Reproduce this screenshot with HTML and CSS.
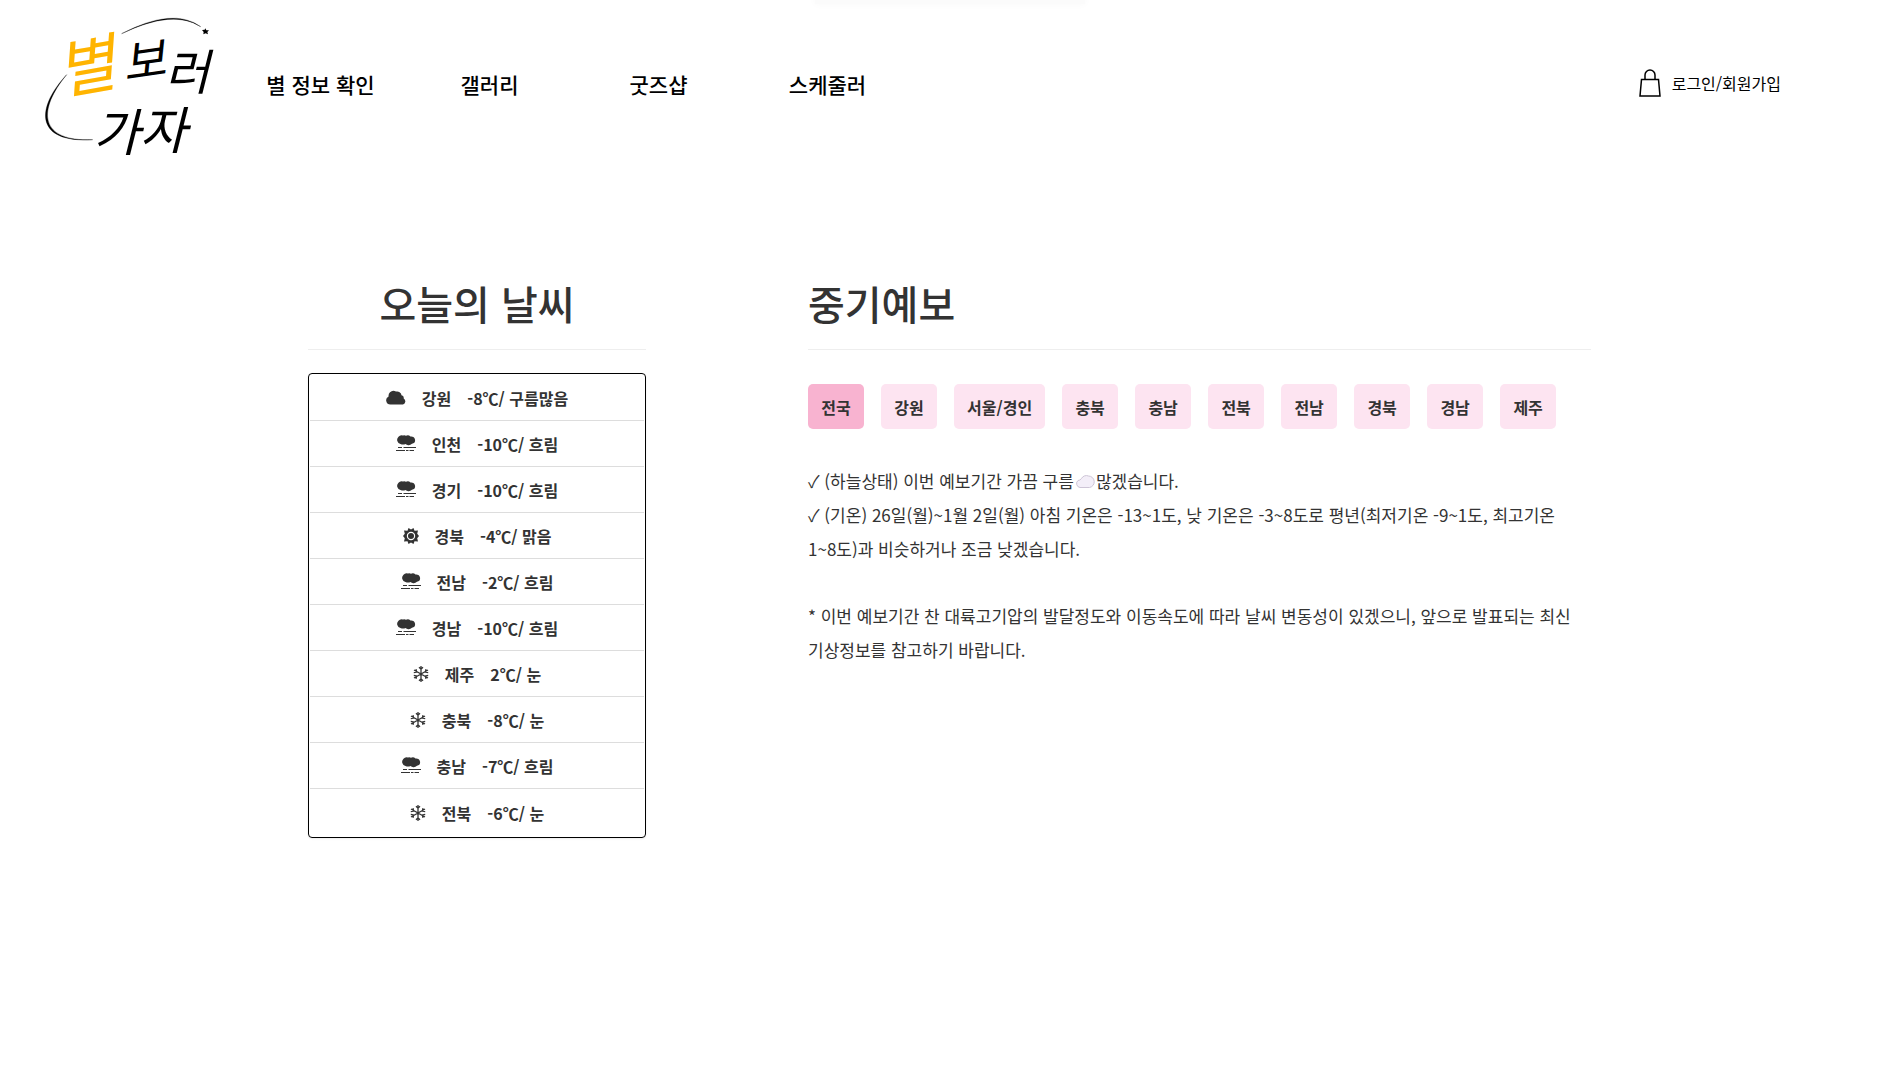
FILE: index.html
```html
<!DOCTYPE html>
<html lang="ko">
<head>
<meta charset="utf-8">
<meta name="viewport" content="width=device-width, initial-scale=1">
<title>별 보러 가자</title>
<link rel="stylesheet" href="styles.css">
</head>
<body>
<svg class="symbols" aria-hidden="true">
  <symbol id="cloud" viewBox="0 0 20 15"><path d="M4.500 14.500A4.200 4.200 0 0 1 2.600 6.500 4.800 4.800 0 0 1 4 2.300 4.800 4.800 0 0 1 10 1.600 4.300 4.300 0 0 1 15.500 5.300a2.800 2.800 0 0 1 2.200 3.200A3.300 3.300 0 0 1 17 14.500z"/></symbol>
  <symbol id="fog" viewBox="0 0 20 17"><path d="M4.500 9A4.200 4.200 0 0 1 2.500 1.800 4 4 0 0 1 7 .6 3.500 3.500 0 0 1 10 .8 4 4 0 0 1 14.500 1.600 3.700 3.700 0 0 1 19 4.500 3.600 3.600 0 0 1 16 8.700q-2 2-4.500 1.300Q10 9.500 9.500 9q-2.500 1-5 0z"/><path d="M2 12.500h4M7.500 12.500h12.500M0 15.500h9M10 15.500h2.500M13.500 15.500h4.500" fill="none" stroke="currentColor" stroke-width="1"/></symbol>
  <symbol id="sun" viewBox="0 0 16 16"><path fill-rule="evenodd" d="M8 1.500L10.500 0l1 2.800 3.500-.300-.800 3.200L16 8l-1.800 2.300.8 3.200-3.500-.3-1 2.800L8 14.500 5.500 16l-1-2.800-3.500.3.800-3.200L0 8l1.800-2.300L1 2.500l3.500.3L5.500 0zM8 3.800a4.200 4.200 0 1 0 0 8.400 4.200 4.200 0 0 0 0-8.400z"/><circle cx="8" cy="8" r="3"/></symbol>
  <symbol id="snow" viewBox="0 0 16 16"><path d="M8 0v16M1 4l14 8M1 12L15 4M6 1.200L8 3.200l2-2M6 14.800L8 12.800l2 2M.8 6.600L3.600 6 3 3.200M15.200 9.400L12.400 10l.6 2.800M.8 9.400l2.800.6L3 12.800M15.200 6.600L12.400 6l.6-2.800" fill="none" stroke="currentColor" stroke-width="1.300"/></symbol>
</svg>
<div class="top-glow"></div>
<header class="header">
  <a class="logo" href="#" aria-label="별 보러 가자">
    <svg viewBox="0 0 600 540">
      <g class="logo-text">
        <text class="star-word" x="78" y="266" font-size="190" transform="rotate(-10 180 190)">별</text>
        <text x="276" y="234" font-size="140" transform="rotate(-8 340 180)">보</text>
        <text x="404" y="270" font-size="146">러</text>
        <text x="190" y="452" font-size="152">가</text>
        <text x="330" y="448" font-size="152">자</text>
      </g>
      <path d="M275 101Q430 20 512 80Q430 26 275 101z" stroke="#000"/>
      <path d="M110 224C12 330 20 430 188 419C26 426 22 330 110 224z" stroke="#000"/>
      <path d="M526 85l3 6 8 0-5 5 2 7-7-3-7 3 1-7-5-6 8-1z"/>
    </svg>
  </a>
  <nav class="nav">
    <a href="#">별 정보 확인</a>
    <a href="#">갤러리</a>
    <a href="#">굿즈샵</a>
    <a href="#">스케줄러</a>
  </nav>
  <div class="account">
    <a class="bag" href="#" aria-label="장바구니"><svg viewBox="0 0 22 28"><path d="M2.500 10.500h17l1.500 16.500H1zM6 10.500V6a5 5 0 0 1 10 0v4.500" fill="none" stroke="#000" stroke-width="1.500"/></svg></a>
    <a href="#">로그인/회원가입</a>
  </div>
</header>
<main class="main">
  <section class="today">
    <h1>오늘의 날씨</h1>
    <ul class="weather">
      <li><svg class="wide cloud"><use href="#cloud"/></svg><span>강원</span><span>-8℃/ 구름많음</span></li>
      <li><svg class="wide"><use href="#fog"/></svg><span>인천</span><span>-10℃/ 흐림</span></li>
      <li><svg class="wide"><use href="#fog"/></svg><span>경기</span><span>-10℃/ 흐림</span></li>
      <li><svg><use href="#sun"/></svg><span>경북</span><span>-4℃/ 맑음</span></li>
      <li><svg class="wide"><use href="#fog"/></svg><span>전남</span><span>-2℃/ 흐림</span></li>
      <li><svg class="wide"><use href="#fog"/></svg><span>경남</span><span>-10℃/ 흐림</span></li>
      <li><svg><use href="#snow"/></svg><span>제주</span><span>2℃/ 눈</span></li>
      <li><svg><use href="#snow"/></svg><span>충북</span><span>-8℃/ 눈</span></li>
      <li><svg class="wide"><use href="#fog"/></svg><span>충남</span><span>-7℃/ 흐림</span></li>
      <li><svg><use href="#snow"/></svg><span>전북</span><span>-6℃/ 눈</span></li>
    </ul>
  </section>
  <section class="forecast">
    <h1>중기예보</h1>
    <div class="tabs">
      <button type="button" class="active">전국</button>
      <button type="button">강원</button>
      <button type="button">서울/경인</button>
      <button type="button">충북</button>
      <button type="button">충남</button>
      <button type="button">전북</button>
      <button type="button">전남</button>
      <button type="button">경북</button>
      <button type="button">경남</button>
      <button type="button">제주</button>
    </div>
    <p>✓ (하늘상태) 이번 예보기간 가끔 구름<svg class="emoji" viewBox="0 0 22 16"><path d="M6 13.500A4 4 0 0 1 4 6.500Q6 6.500 7.500 4.500A5.500 5.500 0 0 1 14.500 2 5.800 5.800 0 0 1 15.500 13.500z" fill="#f3eef8" stroke="#cdc4d6"/></svg>많겠습니다.<br>✓ (기온) 26일(월)~1월 2일(월) 아침 기온은 -13~1도, 낮 기온은 -3~8도로 평년(최저기온 -9~1도, 최고기온 1~8도)과 비슷하거나 조금 낮겠습니다.</p>
    <p>* 이번 예보기간 찬 대륙고기압의 발달정도와 이동속도에 따라 날씨 변동성이 있겠으니, 앞으로 발표되는 최신 기상정보를 참고하기 바랍니다.</p>
  </section>
</main>
</body>
</html>
```
FILE: styles.css
```css
* {
  box-sizing: border-box;
}

body {
  margin: 0;
  background: #fff;
  color: #333;
  font-family: "Noto Sans CJK KR", sans-serif;
  font-size: 16px;
}

a {
  color: #000;
  text-decoration: none;
}

.symbols {
  display: none;
}

.top-glow {
  position: absolute;
  top: -8px;
  left: 50%;
  width: 270px;
  height: 12px;
  margin-left: -135px;
  background: #fbfbfb;
  box-shadow: 0 0 8px rgba(0, 0, 0, 0.03);
}

.header {
  display: flex;
  align-items: center;
  padding: 0 118px 0 30px;
}

.logo svg {
  display: block;
  width: 200px;
  height: 180px;
}

.logo-text {
  font-style: italic;
  font-weight: 400;
}

.star-word {
  fill: #ffb400;
}

.nav {
  display: grid;
  grid-template-columns: repeat(4, 1fr);
  flex: 0 1 676px;
  margin: 0 auto 12px 6px;
  font-size: 21px;
  font-weight: 500;
  line-height: 30px;
  text-align: center;
}

.account {
  display: flex;
  align-items: center;
  gap: 11px;
  margin-bottom: 15px;
  font-size: 16px;
  line-height: 24px;
}

.bag svg {
  display: block;
  width: 22px;
  height: 28px;
}

.main {
  display: grid;
  grid-template-columns: 338fr 783fr;
  gap: 162px;
  max-width: 1283px;
  margin: 0 auto;
  padding: 94px 0 40px;
}

h1 {
  margin: 0;
  padding-bottom: 16px;
  border-bottom: 1px solid #eee;
  font-size: 40px;
  font-weight: 500;
  line-height: 59px;
}

.today h1 {
  text-align: center;
}

.weather {
  margin: 23px 0 0;
  padding: 1px;
  list-style: none;
  border: 1px solid #000;
  border-radius: 4px;
  font-weight: 700;
  box-shadow: 0 1px 2px rgba(0, 0, 0, 0.08);
}

.weather li {
  display: flex;
  align-items: center;
  justify-content: center;
  gap: 16px;
  height: 46px;
  border-bottom: 1px solid #ddd;
}

.weather li:last-child {
  height: 47px;
  border-bottom: 0;
}

.weather svg {
  width: 16px;
  height: 16px;
  fill: currentColor;
}

.weather .wide {
  width: 20px;
  height: 17px;
}

.weather .cloud {
  height: 15px;
}

.tabs {
  display: flex;
  flex-wrap: wrap;
  gap: 17px;
  margin: 34px 0 35px;
}

button {
  min-width: 56px;
  height: 45px;
  padding: 0 13px;
  border: 0;
  border-radius: 5px;
  background: #fde4f1;
  color: #333;
  font: inherit;
  font-weight: 700;
}

button.active {
  background: #f8b3d0;
}

p {
  margin: 0 0 33px;
  font-size: 17px;
  line-height: 34px;
  word-break: keep-all;
}

.emoji {
  width: 22px;
  height: 16px;
  vertical-align: -2px;
}
```
